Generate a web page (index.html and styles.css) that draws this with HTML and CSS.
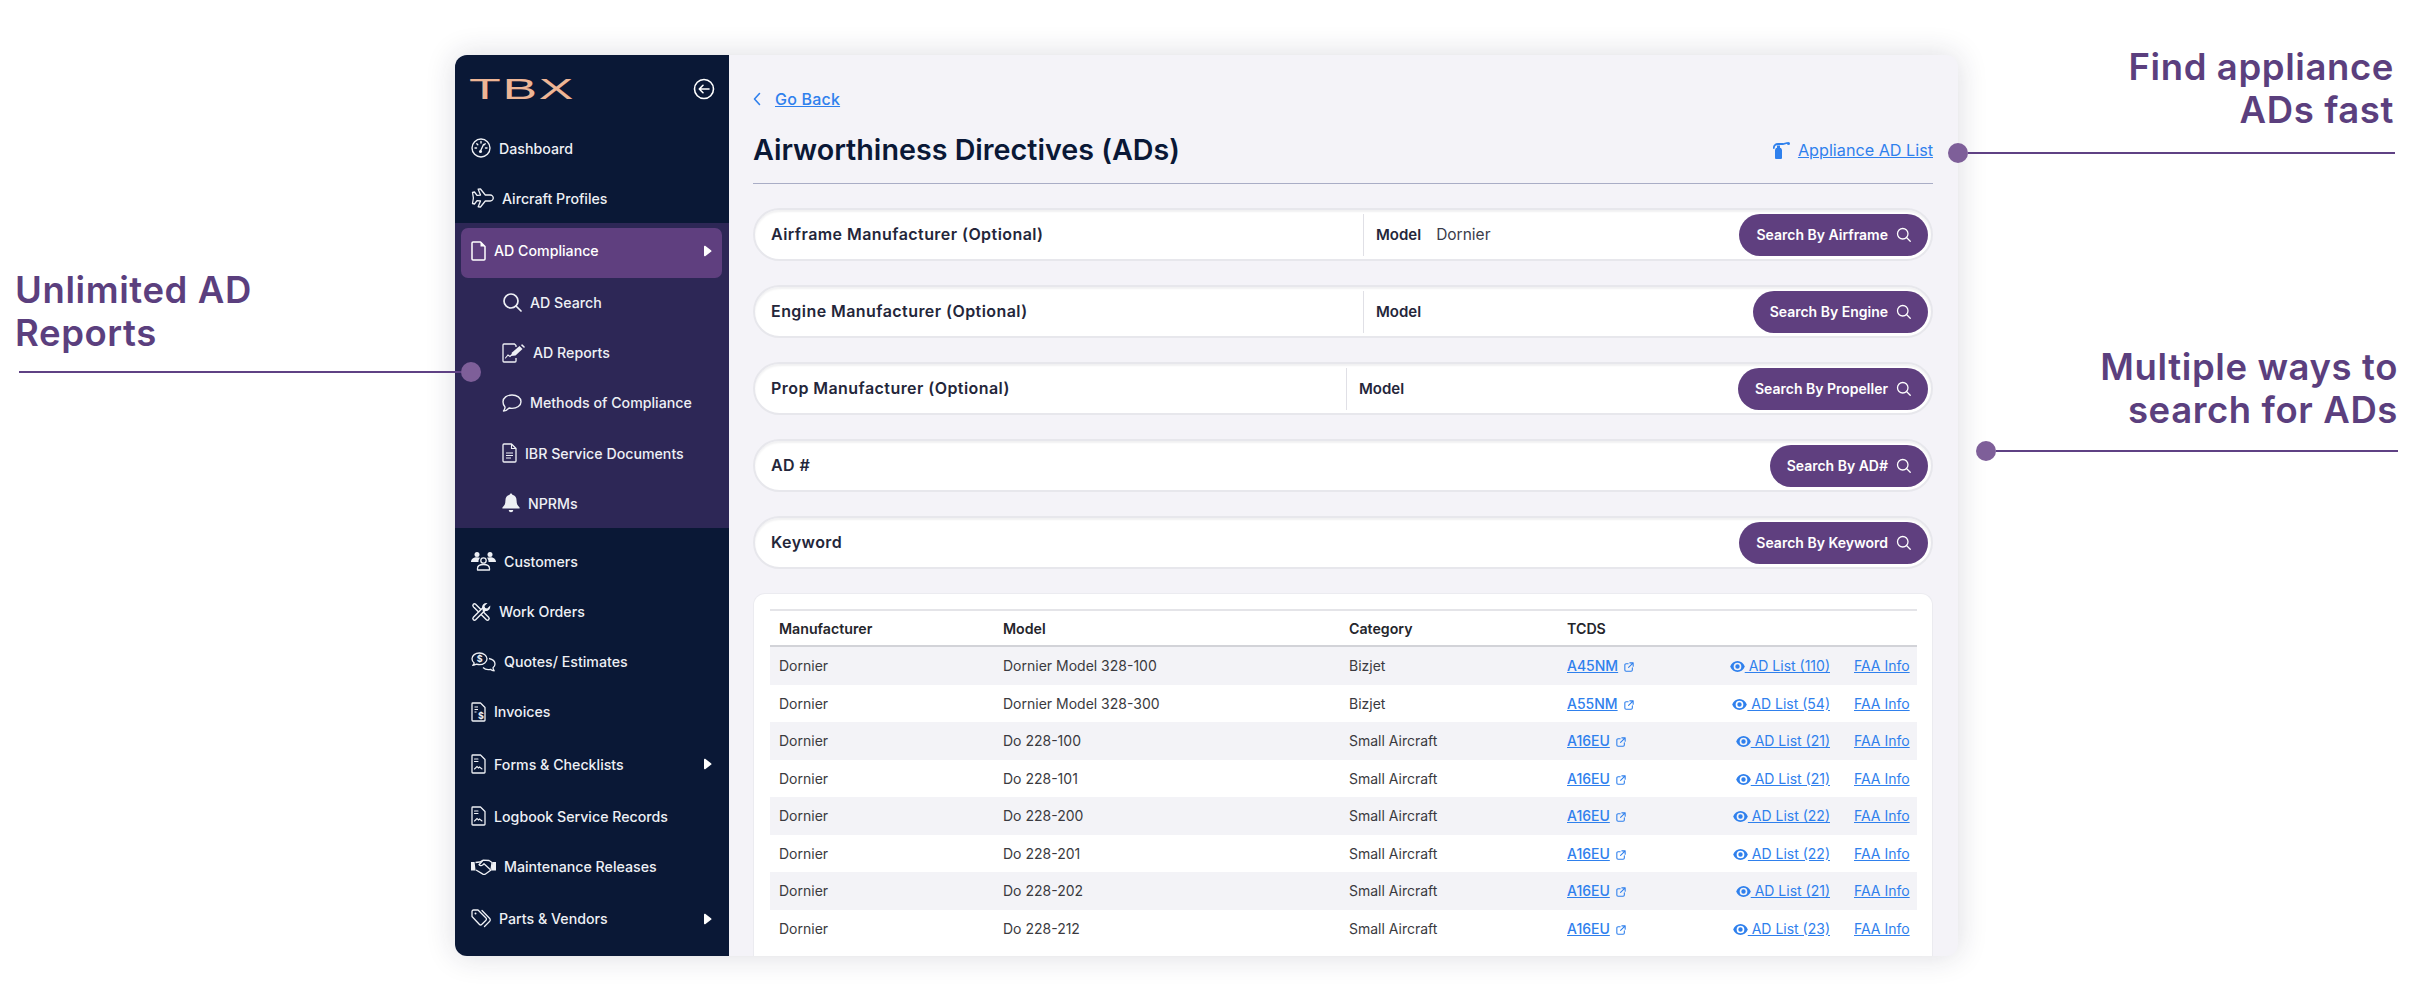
FILE: index.html
```html
<!DOCTYPE html>
<html lang="en">
<head>
    <meta charset="UTF-8">
    <meta name="viewport" content="width=device-width, initial-scale=1.0">
    <title>TBX - Airworthiness Directives</title>
    <link rel="stylesheet" href="styles.css">
</head>
<body>
    <svg class="sprite" width="0" height="0">
        <symbol id="i-search" viewBox="0 0 20 20"><circle cx="9" cy="9" r="7" fill="none" stroke="currentColor" stroke-width="1.700"/><path d="M14 14l5 5" fill="none" stroke="currentColor" stroke-width="1.700" stroke-linecap="round"/></symbol>
        <symbol id="i-eye" viewBox="0 0 16 12"><path d="M8 0C4.400 0 1.400 2.400 0 6c1.400 3.600 4.400 6 8 6s6.600-2.400 8-6c-1.400-3.600-4.400-6-8-6zm0 10.200A4.200 4.200 0 1 1 8 1.800a4.200 4.200 0 0 1 0 8.400zM8 3.600a2.400 2.400 0 1 0 0 4.800 2.400 2.400 0 0 0 0-4.800z" fill="currentColor" fill-rule="evenodd"/></symbol>
        <symbol id="i-ext" viewBox="0 0 12 12"><path d="M5 2H2.500A1.500 1.500 0 0 0 1 3.500v6A1.500 1.500 0 0 0 2.500 11h6A1.500 1.500 0 0 0 10 9.500V7M7 1h4v4M11 1L5.500 6.500" fill="none" stroke="currentColor" stroke-width="1.300" stroke-linecap="round" stroke-linejoin="round"/></symbol>
        <symbol id="i-caret" viewBox="0 0 8 12"><path d="M1.500 1L7 5.200a1 1 0 0 1 0 1.600L1.500 11C.8 11.500 0 11 0 10.200V1.800C0 1 .8.500 1.500 1z" fill="currentColor"/></symbol>
        <symbol id="i-chart-doc" viewBox="0 0 15 20"><path d="M1.800 1h7.700L14 5.500v12.700a.8.800 0 0 1-.8.800H1.800a.8.800 0 0 1-.8-.8V1.800a.8.800 0 0 1 .8-.8z" fill="none" stroke="currentColor" stroke-width="1.300" stroke-linejoin="round"/><path d="M3.500 5h3.500M3.500 7.500h3.500M3.500 15l2.500-2.500 1.500 1.500 1-1 2.500 2" fill="none" stroke="currentColor" stroke-width="1.100" stroke-linecap="round"/></symbol>
    </svg>

    <div class="page">
        <aside class="callout-left">
            <h2 class="callout-title">Unlimited AD<br>Reports</h2>
            <div class="callout-line callout-line-left"></div>
        </aside>

        <div class="app">
            <nav class="sidebar">
                <div class="brand">
                    <span class="logo">TBX</span>
                    <svg class="back-icon" width="22" height="22" viewBox="0 0 22 22"><circle cx="11" cy="11" r="9.500" fill="none" stroke="currentColor" stroke-width="1.600"/><path d="M16 11H6.500M10 7.300L6.300 11l3.700 3.700" fill="none" stroke="currentColor" stroke-width="1.600" stroke-linecap="round" stroke-linejoin="round"/></svg>
                </div>

                <a class="nav-item">
                    <svg class="nav-icon" width="20" height="20" viewBox="0 0 20 20"><circle cx="10" cy="10" r="9" fill="none" stroke="currentColor" stroke-width="1.400"/><path d="M4 10h1.500M5.800 5.800l1 1M10 3.500V5M14.200 5.800l-1 1M16 10h-1.500M12.500 6.500L9.500 13" fill="none" stroke="currentColor" stroke-width="1.400" stroke-linecap="round"/><circle cx="9.500" cy="13.500" r="1.500" fill="currentColor"/></svg>
                    <span>Dashboard</span>
                </a>
                <a class="nav-item">
                    <svg class="nav-icon" width="23" height="20" viewBox="0 0 23 20"><path d="M1.500 4.500l2-.5L6 7.300l3.500-.2L7.200 1.200 9.500 1l4.800 6h5c1.500 0 3 1.400 3 3s-1.500 3-3 3h-5l-4.800 6-2.300-.2 2.300-5.900-3.500-.2L3.500 16l-2-.5.9-5.500z" fill="none" stroke="currentColor" stroke-width="1.300" stroke-linejoin="round"/></svg>
                    <span>Aircraft Profiles</span>
                </a>

                <div class="submenu">
                    <a class="nav-item nav-active">
                        <svg class="nav-icon" width="15" height="20" viewBox="0 0 15 20"><path d="M2 1h7.500L14 5.500V18a1 1 0 0 1-1 1H2a1 1 0 0 1-1-1V2a1 1 0 0 1 1-1z" fill="none" stroke="currentColor" stroke-width="1.500" stroke-linejoin="round"/><path d="M9.500 1v4.500H14z" fill="currentColor"/></svg>
                        <span>AD Compliance</span>
                        <svg class="caret" width="8" height="12"><use href="#i-caret"/></svg>
                    </a>
                    <a class="nav-item sub-item">
                        <svg class="nav-icon" width="20" height="20"><use href="#i-search"/></svg>
                        <span>AD Search</span>
                    </a>
                    <a class="nav-item sub-item">
                        <svg class="nav-icon" width="23" height="20" viewBox="0 0 23 20"><path d="M14 4V2.500L12.500 1H2a1 1 0 0 0-1 1v16a1 1 0 0 0 1 1h11a1 1 0 0 0 1-1v-3" fill="none" stroke="currentColor" stroke-width="1.300" stroke-linejoin="round"/><path d="M3.500 15l2.500-3 2 1.500 1.500-1.500" fill="none" stroke="currentColor" stroke-width="1.100" stroke-linecap="round"/><path d="M9 13l1-3.500L17.500 3l3 3-7 6.500z" fill="currentColor"/><path d="M20 2.200l2 1.800" stroke="currentColor" stroke-width="1.600" stroke-linecap="round"/></svg>
                        <span>AD Reports</span>
                    </a>
                    <a class="nav-item sub-item">
                        <svg class="nav-icon" width="20" height="18" viewBox="0 0 20 18"><path d="M10 1c5 0 9 2.900 9 6.700s-4 6.700-9 6.700c-1 0-2-.1-2.900-.4C5.500 15.800 3.500 17 1.500 17c.9-1 1.600-2.500 1.500-4C1.800 11.800 1 10 1 7.700 1 3.900 5 1 10 1z" fill="none" stroke="currentColor" stroke-width="1.400" stroke-linejoin="round"/></svg>
                        <span>Methods of Compliance</span>
                    </a>
                    <a class="nav-item sub-item">
                        <svg class="nav-icon" width="15" height="20" viewBox="0 0 15 20"><path d="M2 1h7.500L14 5.500V18a1 1 0 0 1-1 1H2a1 1 0 0 1-1-1V2a1 1 0 0 1 1-1z" fill="none" stroke="currentColor" stroke-width="1.300" stroke-linejoin="round"/><path d="M9.500 1v4.500H14M4 10h7M4 12.500h7M4 15h5" fill="none" stroke="currentColor" stroke-width="1.100"/></svg>
                        <span>IBR Service Documents</span>
                    </a>
                    <a class="nav-item sub-item">
                        <svg class="nav-icon" width="18" height="20" viewBox="0 0 18 20"><path d="M9 .5c.8 0 1.300.6 1.300 1.300 2.900.6 4.300 3 4.300 5.900 0 3.300 1 4.800 3 6.800v1H.4v-1c2-2 3-3.500 3-6.800 0-2.900 1.400-5.300 4.300-5.900C7.700 1.100 8.200.5 9 .5zM6.800 17h4.400c0 1.300-1 2.300-2.200 2.300S6.800 18.300 6.800 17z" fill="currentColor"/></svg>
                        <span>NPRMs</span>
                    </a>
                </div>

                <a class="nav-item nav-first">
                    <svg class="nav-icon" width="25" height="20" viewBox="0 0 25 20"><circle cx="6" cy="3.500" r="2.500" fill="currentColor"/><circle cx="19" cy="3.500" r="2.500" fill="currentColor"/><path d="M0 11c0-3 2.500-4.800 6-4.800 1.200 0 2.300.2 3.200.6C8 7.800 7.300 9.500 7.500 11zM25 11c0-3-2.500-4.800-6-4.800-1.200 0-2.300.2-3.200.6 1.200 1 1.900 2.700 1.700 4.200z" fill="currentColor"/><circle cx="12.500" cy="9.500" r="2.700" fill="none" stroke="currentColor" stroke-width="1.300"/><path d="M6.500 19v-1.500c0-2.500 2.700-4 6-4s6 1.500 6 4V19z" fill="none" stroke="currentColor" stroke-width="1.300" stroke-linejoin="round"/></svg>
                    <span>Customers</span>
                </a>
                <a class="nav-item">
                    <svg class="nav-icon" width="20" height="20" viewBox="0 0 20 20"><path d="M3.500 3.500L16.500 16.500" stroke="currentColor" stroke-width="4.600" stroke-linecap="round"/><path d="M3.500 3.500L16.500 16.500" class="icon-hollow" stroke-width="1.800" stroke-linecap="round"/><path d="M3.500 16.500L12.500 7.500" stroke="currentColor" stroke-width="4.600" stroke-linecap="round"/><path d="M3.500 16.500L12.500 7.500" class="icon-hollow" stroke-width="1.800" stroke-linecap="round"/><path d="M11 5.500C11 2.500 13.500.5 16.500 1l-3 3 .5 2 2.200.4 3-3c.6 3-1.700 5.800-4.700 5.600L12 10z" fill="currentColor"/></svg>
                    <span>Work Orders</span>
                </a>
                <a class="nav-item">
                    <svg class="nav-icon" width="25" height="20" viewBox="0 0 25 20"><path d="M8.500 1C4.400 1 1 3.400 1 6.800c0 1.700.8 3.200 2.200 4.200-.2 1-.8 1.800-1.500 2.400 1.400 0 2.800-.5 3.800-1.300 1 .3 2 .5 3 .5 4.100 0 7.500-2.600 7.500-5.800S12.600 1 8.500 1z" fill="none" stroke="currentColor" stroke-width="1.300" stroke-linejoin="round"/><path d="M18 6.500c3.300.7 6 2.800 6 5.500 0 1.500-.8 2.800-2 3.800.1 1.200.6 2.200 1.200 3-1.500 0-2.800-.5-3.800-1.500-2.500.5-5.500 0-7.400-1.800" fill="none" stroke="currentColor" stroke-width="1.300" stroke-linejoin="round"/><text x="5.700" y="10.400" class="icon-text">$</text></svg>
                    <span>Quotes/ Estimates</span>
                </a>
                <a class="nav-item">
                    <svg class="nav-icon" width="15" height="20" viewBox="0 0 15 20"><path d="M1.800 1h7.700L14 5.500v12.700a.8.800 0 0 1-.8.800H1.800a.8.800 0 0 1-.8-.8V1.800a.8.800 0 0 1 .8-.8z" fill="none" stroke="currentColor" stroke-width="1.300" stroke-linejoin="round"/><path d="M3.500 5h3.500M3.500 7.500h3.500M3.500 10h2" fill="none" stroke="currentColor" stroke-width="1.100"/><text x="7" y="16.800" class="icon-text">$</text></svg>
                    <span>Invoices</span>
                </a>
                <a class="nav-item nav-spaced">
                    <svg class="nav-icon" width="15" height="20"><use href="#i-chart-doc"/></svg>
                    <span>Forms &amp; Checklists</span>
                    <svg class="caret" width="8" height="12"><use href="#i-caret"/></svg>
                </a>
                <a class="nav-item nav-spaced">
                    <svg class="nav-icon" width="15" height="20"><use href="#i-chart-doc"/></svg>
                    <span>Logbook Service Records</span>
                </a>
                <a class="nav-item">
                    <svg class="nav-icon" width="25" height="16" viewBox="0 0 25 16"><path d="M0 3h3.600l1 8.500H0zM25 3h-3.600l-1 8.500H25z" fill="currentColor"/><path d="M4.500 3.500L8.800 3 12 1.200l6 .3 3 2L20 11l-5.500 4c-1 .7-2.200.6-3-.1L5 11" fill="none" stroke="currentColor" stroke-width="1.300" stroke-linejoin="round"/><path d="M12 1.200L8 5.700c1 1.300 2.600 1.300 3.700.2L13 4.700l6.500 6" fill="none" stroke="currentColor" stroke-width="1.300" stroke-linejoin="round"/></svg>
                    <span>Maintenance Releases</span>
                </a>
                <a class="nav-item nav-spaced">
                    <svg class="nav-icon" width="20" height="20" viewBox="0 0 20 20"><path d="M1 2.500A1.500 1.500 0 0 1 2.500 1H7l8 8a1.500 1.500 0 0 1 0 2.200l-4.300 4.300a1.500 1.500 0 0 1-2.200 0L1 7.500z" fill="none" stroke="currentColor" stroke-width="1.300" stroke-linejoin="round"/><path d="M11 1.500l7.500 7.800c1 1 1 2.200 0 3.200l-5 5" fill="none" stroke="currentColor" stroke-width="1.300" stroke-linecap="round"/><circle cx="4.500" cy="4.500" r="1" fill="currentColor"/></svg>
                    <span>Parts &amp; Vendors</span>
                    <svg class="caret" width="8" height="12"><use href="#i-caret"/></svg>
                </a>
            </nav>

            <main class="content">
                <a class="go-back">
                    <svg width="8" height="14" viewBox="0 0 8 14"><path d="M6.500 1.500L1.500 7l5 5.500" fill="none" stroke="currentColor" stroke-width="1.600" stroke-linecap="round" stroke-linejoin="round"/></svg>
                    <span>Go Back</span>
                </a>

                <header class="page-head">
                    <h1>Airworthiness Directives (ADs)</h1>
                    <a class="appliance-link">
                        <svg width="17" height="17" viewBox="0 0 17 17"><path d="M2 8.500C2 7 3 6 4 5.800V3.500h3v2.300C8 6 9 7 9 8.500V16a1 1 0 0 1-1 1H3a1 1 0 0 1-1-1z" fill="currentColor"/><path d="M.8 6C.8 3.500 2.500 2 5 2h5l4-1" fill="none" stroke="currentColor" stroke-width="1.800" stroke-linecap="round"/><circle cx="15.500" cy="1.500" r="1.500" fill="currentColor"/></svg>
                        <span>Appliance AD List</span>
                    </a>
                </header>

                <section class="search-bar">
                    <div class="maker">Airframe Manufacturer (Optional)</div>
                    <div class="model"><b>Model</b><span>Dornier</span></div>
                    <button class="search-btn">Search By Airframe <svg width="15" height="15"><use href="#i-search"/></svg></button>
                </section>
                <section class="search-bar">
                    <div class="maker">Engine Manufacturer (Optional)</div>
                    <div class="model"><b>Model</b></div>
                    <button class="search-btn">Search By Engine <svg width="15" height="15"><use href="#i-search"/></svg></button>
                </section>
                <section class="search-bar">
                    <div class="maker maker-short">Prop Manufacturer (Optional)</div>
                    <div class="model"><b>Model</b></div>
                    <button class="search-btn">Search By Propeller <svg width="15" height="15"><use href="#i-search"/></svg></button>
                </section>
                <section class="search-bar">
                    <div class="maker">AD #</div>
                    <button class="search-btn">Search By AD# <svg width="15" height="15"><use href="#i-search"/></svg></button>
                </section>
                <section class="search-bar">
                    <div class="maker">Keyword</div>
                    <button class="search-btn">Search By Keyword <svg width="15" height="15"><use href="#i-search"/></svg></button>
                </section>

                <section class="results">
                    <table>
                        <colgroup>
                            <col class="col-maker"><col class="col-model"><col class="col-cat"><col class="col-tcds"><col class="col-list"><col>
                        </colgroup>
                        <thead>
                            <tr><th>Manufacturer</th><th>Model</th><th>Category</th><th>TCDS</th><th></th><th></th></tr>
                        </thead>
                        <tbody>
                            <tr><td>Dornier</td><td>Dornier Model 328-100</td><td>Bizjet</td><td><a class="tcds">A45NM</a> <svg class="ext" width="10" height="10"><use href="#i-ext"/></svg></td><td class="list-cell"><a><svg class="eye" width="15" height="11"><use href="#i-eye"/></svg> AD List (110)</a></td><td class="info-cell"><a>FAA Info</a></td></tr>
                            <tr><td>Dornier</td><td>Dornier Model 328-300</td><td>Bizjet</td><td><a class="tcds">A55NM</a> <svg class="ext" width="10" height="10"><use href="#i-ext"/></svg></td><td class="list-cell"><a><svg class="eye" width="15" height="11"><use href="#i-eye"/></svg> AD List (54)</a></td><td class="info-cell"><a>FAA Info</a></td></tr>
                            <tr><td>Dornier</td><td>Do 228-100</td><td>Small Aircraft</td><td><a class="tcds">A16EU</a> <svg class="ext" width="10" height="10"><use href="#i-ext"/></svg></td><td class="list-cell"><a><svg class="eye" width="15" height="11"><use href="#i-eye"/></svg> AD List (21)</a></td><td class="info-cell"><a>FAA Info</a></td></tr>
                            <tr><td>Dornier</td><td>Do 228-101</td><td>Small Aircraft</td><td><a class="tcds">A16EU</a> <svg class="ext" width="10" height="10"><use href="#i-ext"/></svg></td><td class="list-cell"><a><svg class="eye" width="15" height="11"><use href="#i-eye"/></svg> AD List (21)</a></td><td class="info-cell"><a>FAA Info</a></td></tr>
                            <tr><td>Dornier</td><td>Do 228-200</td><td>Small Aircraft</td><td><a class="tcds">A16EU</a> <svg class="ext" width="10" height="10"><use href="#i-ext"/></svg></td><td class="list-cell"><a><svg class="eye" width="15" height="11"><use href="#i-eye"/></svg> AD List (22)</a></td><td class="info-cell"><a>FAA Info</a></td></tr>
                            <tr><td>Dornier</td><td>Do 228-201</td><td>Small Aircraft</td><td><a class="tcds">A16EU</a> <svg class="ext" width="10" height="10"><use href="#i-ext"/></svg></td><td class="list-cell"><a><svg class="eye" width="15" height="11"><use href="#i-eye"/></svg> AD List (22)</a></td><td class="info-cell"><a>FAA Info</a></td></tr>
                            <tr><td>Dornier</td><td>Do 228-202</td><td>Small Aircraft</td><td><a class="tcds">A16EU</a> <svg class="ext" width="10" height="10"><use href="#i-ext"/></svg></td><td class="list-cell"><a><svg class="eye" width="15" height="11"><use href="#i-eye"/></svg> AD List (21)</a></td><td class="info-cell"><a>FAA Info</a></td></tr>
                            <tr><td>Dornier</td><td>Do 228-212</td><td>Small Aircraft</td><td><a class="tcds">A16EU</a> <svg class="ext" width="10" height="10"><use href="#i-ext"/></svg></td><td class="list-cell"><a><svg class="eye" width="15" height="11"><use href="#i-eye"/></svg> AD List (23)</a></td><td class="info-cell"><a>FAA Info</a></td></tr>
                        </tbody>
                    </table>
                </section>
            </main>
        </div>

        <aside class="callout-right">
            <div class="callout-fast">
                <h2 class="callout-title">Find appliance<br>ADs fast</h2>
                <div class="callout-line callout-line-fast"></div>
            </div>
            <div class="callout-ways">
                <h2 class="callout-title">Multiple ways to<br>search for ADs</h2>
                <div class="callout-line callout-line-ways"></div>
            </div>
        </aside>
    </div>
</body>
</html>
```

FILE: styles.css
```css
body {
    margin: 0;
    background-color: #fff;
    font-family: 'Inter', 'Liberation Sans', sans-serif;
    overflow: hidden;
}

a {
    color: inherit;
}

.sprite {
    position: absolute;
}

.page {
    display: grid;
    grid-template-columns: 455px 1503px 458px;
    height: 996px;
}

/* Callouts around the app window */
.callout-left {
    position: relative;
    z-index: 2;
    padding: 269px 0 0 15px;
}

.callout-right {
    position: relative;
    z-index: 2;
    text-align: right;
    padding-top: 46px;
}

.callout-title {
    margin: 0;
    font-size: 36.500px;
    line-height: 42.500px;
    letter-spacing: 0.6px;
    font-weight: 600;
    color: #5b3f7e;
}

.callout-line {
    position: relative;
    height: 2px;
    background-color: #5f4184;
}

.callout-line-left {
    width: 442px;
    margin: 17px 0 0 4px;
}

.callout-line-left::after {
    content: "";
    position: absolute;
    right: -20px;
    top: -9px;
    width: 20px;
    height: 20px;
    border-radius: 50%;
    background-color: #7e5f99;
}

.callout-line-fast::before,
.callout-line-ways::before {
    content: "";
    position: absolute;
    left: -20px;
    top: -9px;
    width: 20px;
    height: 20px;
    border-radius: 50%;
    background-color: #7e5f99;
}

.callout-fast {
    padding-right: 22px;
}

.callout-line-fast {
    margin: 21px -1px 0 10px;
}

.callout-ways {
    margin-top: 192px;
    padding-right: 18px;
}

.callout-line-ways {
    margin: 19px 0 0 38px;
}

/* App window */
.app {
    display: flex;
    height: 901px;
    margin-top: 55px;
    border-radius: 12px;
    overflow: hidden;
    background-color: #f4f3f8;
    box-shadow: 0 0 30px rgba(30, 30, 60, 0.16);
}

.sidebar {
    flex: none;
    width: 274px;
    background-color: #0a1836;
    color: #eef0f5;
    font-size: 14.200px;
    font-weight: 500;
}

.brand {
    display: flex;
    align-items: center;
    justify-content: space-between;
    height: 68px;
    padding: 0 14px;
}

.logo {
    font-family: 'Liberation Sans', sans-serif;
    font-size: 30px;
    line-height: 30px;
    color: #eeb595;
    letter-spacing: 1px;
    transform: scaleX(1.730);
    transform-origin: left center;
}

.back-icon {
    color: #fff;
}

.nav-item {
    display: flex;
    align-items: center;
    height: 50.200px;
    padding: 0 17px 0 16px;
    box-sizing: border-box;
    white-space: nowrap;
}

.nav-icon {
    flex: none;
    margin-right: 8px;
}

.icon-text {
    font-size: 9px;
    font-weight: 700;
    fill: currentColor;
}

.icon-hollow {
    stroke: #0a1836;
}

.caret {
    margin-left: auto;
    color: #fff;
}

.nav-first {
    margin-top: 8px;
}

.nav-spaced {
    margin-top: 2px;
}

.submenu {
    padding-top: 5px;
    background-color: #2d2756;
}

.nav-active {
    height: 50px;
    margin: 0 7px -1px 6px;
    padding: 0 10px 5px;
    border-radius: 7px;
    background-color: #5f3f7f;
    color: #fff;
}

.sub-item {
    padding-left: 47px;
}

/* Main content */
.content {
    flex: 1;
    display: flex;
    flex-direction: column;
    padding: 34px 25px 0 24px;
    min-width: 0;
}

.go-back {
    display: flex;
    align-items: center;
    gap: 14px;
    height: 20px;
    font-size: 16px;
    letter-spacing: 0.2px;
    font-weight: 500;
    color: #2f80ed;
}

.go-back span,
.appliance-link span {
    text-decoration: underline;
}

.page-head {
    display: flex;
    align-items: center;
    justify-content: space-between;
    margin-top: 19px;
    padding-bottom: 11px;
    border-bottom: 1px solid #a9adc6;
}

.page-head h1 {
    margin: 0;
    font-size: 28.700px;
    line-height: 44px;
    font-weight: 600;
    color: #0a1836;
}

.appliance-link {
    display: flex;
    align-items: center;
    gap: 8px;
    font-size: 16.200px;
    color: #2f80ed;
}

.search-bar {
    display: flex;
    align-items: center;
    flex: none;
    height: 53px;
    margin-top: 24px;
    padding: 0 3px 0 16px;
    box-sizing: border-box;
    border: 2px solid #e7e7ec;
    border-radius: 27px;
    background-color: #fff;
    box-shadow: inset 0 2px 2px rgba(20, 20, 40, 0.06);
    font-size: 16px;
    letter-spacing: 0.440px;
    font-weight: 600;
    color: #24263a;
}

.maker {
    width: 592px;
    padding-bottom: 2px;
}

.maker-short {
    width: 575px;
}

.model {
    display: flex;
    align-items: center;
    gap: 15px;
    height: 42px;
    padding-left: 12px;
    border-left: 1px solid #e0e0e6;
    font-size: 15px;
    letter-spacing: 0;
}

.model b {
    font-weight: 600;
}

.model span {
    font-size: 15.500px;
    font-weight: 400;
    color: #3a3c4a;
}

.search-btn {
    display: flex;
    align-items: center;
    gap: 8px;
    height: 42px;
    margin-left: auto;
    padding: 0 17px;
    border: none;
    border-radius: 21px;
    background-color: #5f3f7f;
    color: #fff;
    font-family: inherit;
    font-size: 14px;
    font-weight: 600;
    white-space: nowrap;
}

.results {
    flex: 1;
    margin-top: 24px;
    padding: 15px 15px 0 16px;
    background-color: #fff;
    border: 1px solid #ebebf0;
    border-bottom: none;
    border-radius: 12px 12px 0 0;
}

table {
    width: 100%;
    table-layout: fixed;
    border-collapse: collapse;
    font-size: 14px;
    color: #3a3a40;
}

.col-maker {
    width: 224px;
}

.col-model {
    width: 346px;
}

.col-cat {
    width: 218px;
}

.col-tcds {
    width: 163px;
}

.col-list {
    width: 124px;
}

th {
    height: 34px;
    padding: 0 0 0 9px;
    border-top: 2px solid #e4e4e8;
    border-bottom: 2px solid #d2d3d8;
    text-align: left;
    font-size: 14.200px;
    font-weight: 600;
    color: #24252b;
}

td {
    height: 37.500px;
    padding: 0 0 0 9px;
    white-space: nowrap;
}

tbody tr:nth-child(odd) {
    background-color: #f3f3f7;
}

td a {
    color: #2f80ed;
    text-decoration: underline;
}

td svg {
    color: #2f80ed;
    vertical-align: -1px;
}

.tcds {
    font-weight: 500;
}

.ext {
    margin-left: 2px;
}

.list-cell {
    padding: 0 15px 0 0;
    text-align: right;
}

.info-cell {
    padding-left: 9px;
}
```
